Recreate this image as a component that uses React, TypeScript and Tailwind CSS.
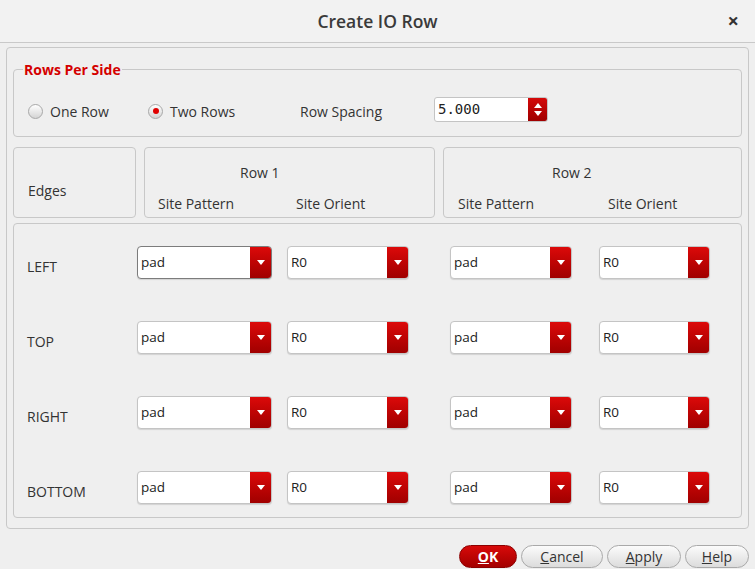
import React from "react";

const EDGES = ["LEFT", "TOP", "RIGHT", "BOTTOM"];

function Arrow() {
  return (
    <svg width="8" height="5" viewBox="0 0 8 5">
      <path d="M0 0 L8 0 L4 5 Z" fill="#fff" />
    </svg>
  );
}

function Combo({ value, width, focused }: { value: string; width: string; focused?: boolean }) {
  return (
    <div
      className={`${width} h-[33px] flex rounded-[4px] bg-white border ${
        focused ? "border-[#7c7c7c]" : "border-[#c4c4c4]"
      } shadow-[0_1px_1px_rgba(0,0,0,0.12)] overflow-hidden`}
    >
      <div className="flex-1 pl-[3px] pt-[5px] text-[13.5px] text-[#222]">{value}</div>
      <div className="w-[21px] flex items-center justify-center bg-gradient-to-b from-[#dc0a0a] to-[#a00000]">
        <Arrow />
      </div>
    </div>
  );
}

function Radio({ checked, label }: { checked?: boolean; label: string }) {
  return (
    <div className="flex items-center gap-[7px]">
      <div className="w-[15px] h-[15px] rounded-full border border-[#a8a8a8] bg-gradient-to-b from-white to-[#d4d4d4] flex items-center justify-center">
        {checked && <div className="w-[6px] h-[6px] rounded-full bg-[#e00000]" />}
      </div>
      <span>{label}</span>
    </div>
  );
}

function Button({ children, primary, width }: { children: React.ReactNode; primary?: boolean; width: string }) {
  return (
    <div
      className={`${width} h-[23px] rounded-full flex items-center justify-center text-[14px] ${
        primary
          ? "bg-gradient-to-b from-[#d80a0a] to-[#a40000] text-white font-bold border border-[#8c0000]"
          : "bg-gradient-to-b from-[#fbfbfb] to-[#dcdcdc] text-[#333] border border-[#a9a9a9]"
      }`}
    >
      {children}
    </div>
  );
}

export default function App() {
  return (
    <div
      className="w-[755px] h-[569px] bg-[#efefef] text-[#333] text-[14px] overflow-hidden flex flex-col"
      style={{ fontFamily: '"Open Sans", "Noto Sans", sans-serif' }}
    >
      {/* title bar */}
      <div className="h-[43px] shrink-0 bg-[#f2f2f2] border-b border-[#c9c9c9] flex items-center relative">
        <div className="flex-1 text-center text-[17.5px] font-semibold text-[#3a3a3a]">Create IO Row</div>
        <div className="absolute right-[16px] top-[6px] text-[20px] font-bold text-[#333]">×</div>
      </div>

      {/* outer frame */}
      <div className="mx-[6px] mt-[4px] h-[482px] border border-[#c8c8c8] rounded-[4px] px-[6px] pt-[21px] flex flex-col">
        {/* Rows per side group */}
        <div className="h-[68px] border border-[#c8c8c8] rounded-[4px] relative flex items-center pl-[14px] pt-[16px]">
          <span className="absolute -top-[11px] left-[9px] px-[1px] bg-[#efefef] text-[#d40000] font-bold text-[14px]">
            Rows Per Side
          </span>
          <div className="w-[120px]">
            <Radio label="One Row" />
          </div>
          <div className="w-[152px]">
            <Radio checked label="Two Rows" />
          </div>
          <span className="w-[134px]">Row Spacing</span>
          <div className="w-[114px] h-[25px] flex bg-white border border-[#c4c4c4] rounded-[3px] overflow-hidden -mt-[3px]">
            <div className="flex-1 pl-[3px] pt-[1px] text-[14px] text-[#222]" style={{ fontFamily: '"DejaVu Sans Mono", monospace' }}>
              5.000
            </div>
            <div className="w-[19px] flex flex-col items-center justify-center gap-[3px] bg-gradient-to-b from-[#d40a0a] to-[#a00000]">
              <svg width="8" height="5" viewBox="0 0 8 5">
                <path d="M0 5 L8 5 L4 0 Z" fill="#fff" />
              </svg>
              <Arrow />
            </div>
          </div>
        </div>

        {/* header */}
        <div className="mt-[10px] h-[71px] flex gap-[8px]">
          <div className="w-[123px] border border-[#c8c8c8] rounded-[4px] flex items-center pl-[14px] pt-[16px]">Edges</div>
          <div className="w-[291px] border border-[#c8c8c8] rounded-[4px] relative">
            <div className="absolute top-[14px] left-[95px]">Row 1</div>
            <div className="absolute top-[45px] left-[13px]">Site Pattern</div>
            <div className="absolute top-[45px] left-[151px]">Site Orient</div>
          </div>
          <div className="flex-1 border border-[#c8c8c8] rounded-[4px] relative">
            <div className="absolute top-[14px] left-[108px]">Row 2</div>
            <div className="absolute top-[45px] left-[14px]">Site Pattern</div>
            <div className="absolute top-[45px] left-[164px]">Site Orient</div>
          </div>
        </div>

        {/* edge rows */}
        <div className="mt-[5px] h-[295px] border border-[#c8c8c8] rounded-[4px] pt-[22px] pl-[13px] flex flex-col gap-[42px]">
          {EDGES.map((edge, i) => (
            <div key={edge} className="flex items-center h-[33px]">
              <div className="w-[110px] pt-[7px]">{edge}</div>
              <Combo value="pad" width="w-[135px]" focused={i === 0} />
              <div className="ml-[15px]">
                <Combo value="R0" width="w-[122px]" />
              </div>
              <div className="ml-[41px]">
                <Combo value="pad" width="w-[122px]" />
              </div>
              <div className="ml-[27px]">
                <Combo value="R0" width="w-[111px]" />
              </div>
            </div>
          ))}
        </div>
      </div>

      {/* buttons */}
      <div className="mt-[16px] flex justify-end gap-[4px] pr-[6px]">
        <Button primary width="w-[58px]">
          <span className="underline">O</span>K
        </Button>
        <Button width="w-[82px]">
          <span className="underline">C</span>ancel
        </Button>
        <Button width="w-[74px]">
          <span className="underline">A</span>pply
        </Button>
        <Button width="w-[64px]">
          <span className="underline">H</span>elp
        </Button>
      </div>
    </div>
  );
}
